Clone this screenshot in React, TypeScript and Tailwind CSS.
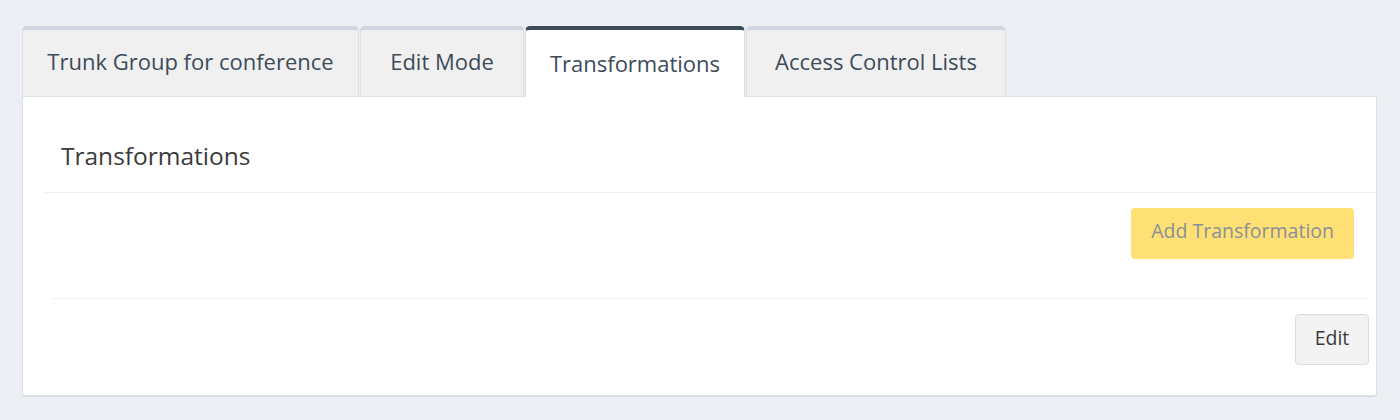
const tabs = [
  { label: "Trunk Group for conference", w: "w-[337px]" },
  { label: "Edit Mode", w: "w-[164px]" },
  { label: "Transformations", w: "w-[220px]" },
  { label: "Access Control Lists", w: "w-[260px]" },
];

export default function App() {
  const active = 2;
  return (
    <div
      className="min-h-[420px] bg-[#ebeef2] pt-[26px] pl-[22px] pr-[23px]"
      style={{ fontFamily: "'Open Sans', Lato, sans-serif" }}
    >
      {/* Tabs */}
      <div className="flex gap-[1px] relative z-10">
        {tabs.map((t, i) =>
          i === active ? (
            <div
              key={t.label}
              className={`${t.w} h-[71px] -mb-px flex items-center justify-center pb-[1px] bg-white border-t-4 border-[#3d4b59] border-x border-x-[#dcdfe3] rounded-t-[5px] text-[22px] leading-[28px] text-[#3d4b59]`}
            >
              {t.label}
            </div>
          ) : (
            <div
              key={t.label}
              className={`${t.w} h-[70px] flex items-center justify-center pb-[5px] bg-[#f0f0f0] border-t-4 border-[#d1d6de] border-x border-x-[#dcdfe3] rounded-t-[5px] text-[22px] leading-[28px] text-[#3d4b59]`}
            >
              {t.label}
            </div>
          )
        )}
      </div>

      {/* Panel */}
      <div className="bg-white border border-[#dcdfe3] rounded-b-[3px] shadow-[0_1px_1px_rgba(0,0,0,0.08)] h-[300px] pt-[45px]">
        <h2 className="ml-[22px] text-[24.5px] text-[#3b3b3b] pl-[16px] pb-[22px] border-b border-[#f0f0f0] leading-[28px]">
          Transformations
        </h2>
        <div className="flex justify-end pt-[15px] pr-[22px] pb-[39px]">
          <button className="h-[51px] px-[20px] pb-[5px] rounded-[4px] bg-[#ffe074] text-[19.5px] leading-[24px] text-[#8a9098]">
            Add Transformation
          </button>
        </div>
        <div className="ml-[30px] mr-[7px] border-t border-[#f0f0f0] pt-[15px] flex justify-end">
          <button className="h-[51px] w-[74px] pb-[4px] rounded-[4px] bg-[#f3f3f3] border border-[#dcdcdc] text-[19.5px] leading-[24px] text-[#3b3b3b]">
            Edit
          </button>
        </div>
      </div>
    </div>
  );
}
